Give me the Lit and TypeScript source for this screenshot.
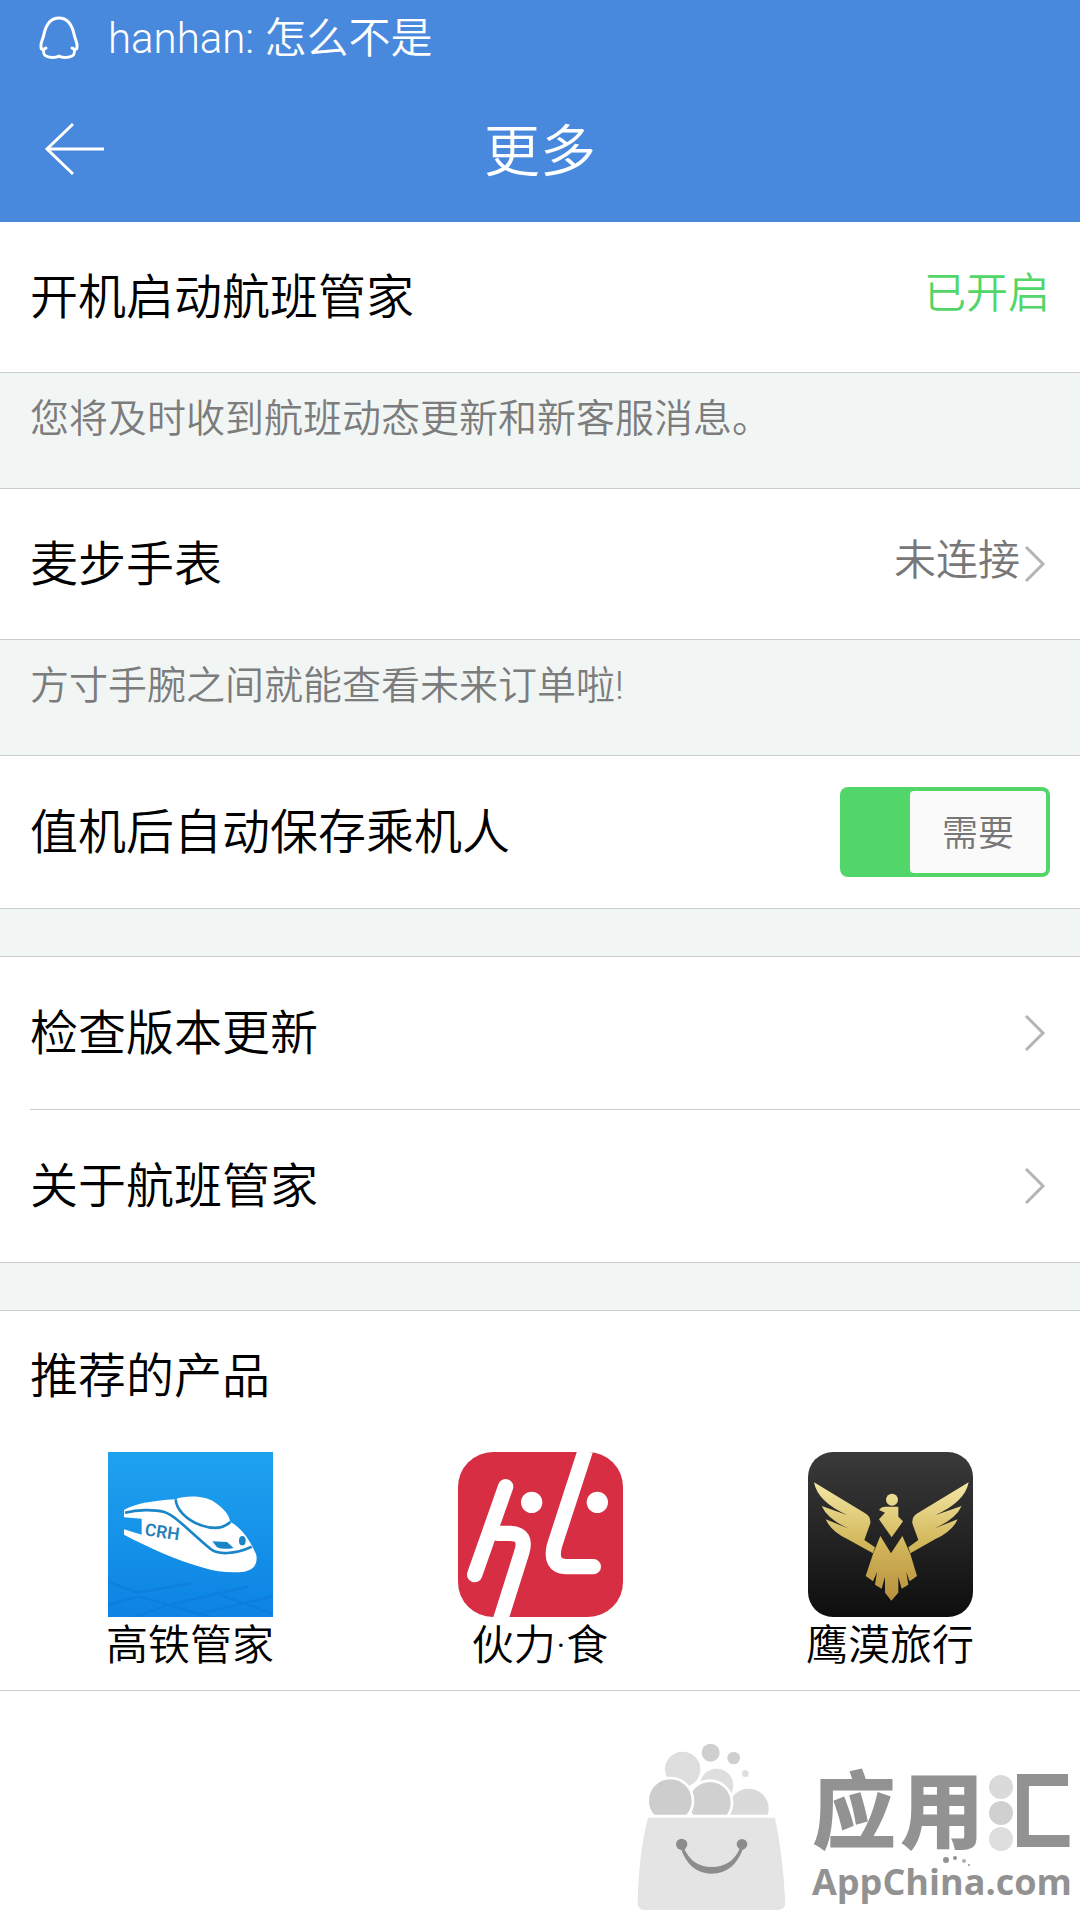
import { LitElement, html, css, svg, nothing } from "lit";
import { customElement, property, state } from "lit/decorators.js";

const trainIcon = svg`
  <defs>
    <linearGradient id="sky" x1="0" y1="0" x2="0" y2="1">
      <stop offset="0" stop-color="#1ea2ee" />
      <stop offset="1" stop-color="#0d83e4" />
    </linearGradient>
  </defs>
  <rect x="21" y="36" width="495" height="495" fill="url(#sky)" />
  <g fill="none" stroke="#0a74cf" stroke-opacity=".4" stroke-width="7">
    <path d="M21 425L110 458L270 430M115 470L330 531M110 470L21 496M205 494L100 531M205 494L440 440M300 520L516 468M350 462L516 522" />
  </g>
  <path fill="#fff" d="M69 210C100 192 150 182 224 178C250 166 310 166 340 186C370 206 384 225 388 246C420 262 445 296 466 345C470 372 460 388 430 395C390 400 350 396 310 384C230 362 150 326 69 284V268L122 284V236L69 232Z" />
  <g fill="none" stroke="#1a86c8" stroke-width="8">
    <path d="M72 218C110 208 160 208 190 216C225 228 260 270 330 328C350 344 400 344 452 320" />
    <path d="M224 178C226 205 250 238 300 256C335 268 365 268 388 246" />
  </g>
  <path fill="#1a86c8" d="M334 304L378 306L398 324Q364 330 348 322Z" />
  <ellipse cx="424" cy="302" rx="10" ry="14" fill="#1a86c8" />
  <text x="130" y="286" transform="rotate(8 130 286)" font-family="Roboto, sans-serif" font-size="52" font-weight="600" fill="#2680b8">CRH</text>`;

const faceIcon = svg`
  <defs><clipPath id="tile"><rect x="21" y="36" width="495" height="495" rx="105" /></clipPath></defs>
  <g clip-path="url(#tile)">
    <rect x="21" y="36" width="495" height="495" fill="#d72e44" />
    <g fill="none" stroke="#fff" stroke-width="46" stroke-linecap="round" stroke-linejoin="round">
      <path d="M164 140L71 404" />
      <path d="M140 280H178Q230 282 212 338L142 560" />
      <path d="M410 10L310 318Q296 378 344 380H427" />
    </g>
    <circle cx="242" cy="187" r="32" fill="#fff" />
    <circle cx="439" cy="187" r="32" fill="#fff" />
  </g>`;

const eagleIcon = svg`
  <defs>
    <linearGradient id="night" x1="0" y1="0" x2="0" y2="1">
      <stop offset="0" stop-color="#3a3a3a" />
      <stop offset="1" stop-color="#0e0e0e" />
    </linearGradient>
    <linearGradient id="gold" gradientUnits="userSpaceOnUse" x1="0" y1="130" x2="0" y2="480">
      <stop offset="0" stop-color="#f3e6a4" />
      <stop offset=".5" stop-color="#d3b85c" />
      <stop offset="1" stop-color="#b8903c" />
    </linearGradient>
  </defs>
  <rect x="21" y="36" width="495" height="495" rx="75" fill="url(#night)" />
  <g fill="url(#gold)">
    <path d="M39 127L190 218Q210 228 208 250L190 300L222 322L216 340L140 298Q90 274 74 238L144 266Q80 238 62 198L140 226Q50 186 39 127Z" />
    <path d="M503 127L352 218Q332 228 334 250L352 300L322 322L328 340L402 298Q454 274 470 238L398 266Q464 238 482 198L402 226Q492 186 503 127Z" />
    <circle cx="273" cy="179" r="18" />
    <path d="M234 210Q240 200 254 200H292V230L306 244L272 292L234 238L252 218Z" />
    <path d="M238 288L270 340L304 288L328 342L348 408L326 424L316 396L322 434L302 446L292 410L292 458L271 482L252 458L252 410L242 446L222 434L228 396L216 424L194 408L216 342Z" />
  </g>`;

const products = [
  { name: "高铁管家", icon: trainIcon },
  { name: "伙力·食", icon: faceIcon },
  { name: "鹰漠旅行", icon: eagleIcon },
];

@customElement("setting-row")
class SettingRow extends LitElement {
  @property() label = "";
  @property() status = "";
  @property({ type: Boolean }) on = false;
  @property({ type: Boolean }) link = false;

  static styles = css`
    :host { display: block; }
    .row {
      box-sizing: border-box;
      min-height: 152px;
      padding: 0 30px;
      display: flex;
      align-items: center;
      justify-content: space-between;
      color: #000;
      text-decoration: none;
      font-size: 48px;
      line-height: 72px;
    }
    :host([status]) .row { min-height: 150px; }
    .label { padding-top: 2px; }
    .side { display: flex; align-items: center; gap: 2px; }
    .status { font-size: 42px; line-height: 60px; padding-bottom: 6px; color: #777; }
    .status.on { color: #52d669; }
    .chevron { display: block; width: 28px; height: 40px; }
  `;

  render() {
    const body = html`
      <span class="label">${this.label}</span>
      <span class="side">
        ${this.status ? html`<span class="status ${this.on ? "on" : ""}">${this.status}</span>` : nothing}
        ${this.link
          ? html`<svg class="chevron" viewBox="0 0 28 40" aria-hidden="true">
              <path d="M4 3L21 20L4 37" fill="none" stroke="#b4b4b4" stroke-width="3" />
            </svg>`
          : nothing}
        <slot></slot>
      </span>`;
    return this.link ? html`<a class="row" href="#">${body}</a>` : html`<div class="row">${body}</div>`;
  }
}

@customElement("need-switch")
class NeedSwitch extends LitElement {
  @state() private checked = true;

  static styles = css`
    :host { display: block; }
    .switch {
      box-sizing: border-box;
      width: 210px;
      height: 90px;
      padding: 4px;
      display: flex;
      border-radius: 8px;
      background: #52d669;
      cursor: pointer;
    }
    .box { appearance: none; margin: 0; flex: 1; }
    .knob {
      box-sizing: border-box;
      width: 136px;
      padding-top: 4px;
      display: grid;
      place-items: center;
      border-radius: 4px;
      background: #fafafa;
      color: #777;
      font-size: 36px;
      line-height: 52px;
    }
  `;

  render() {
    return html`<label class="switch">
      <input class="box" type="checkbox" .checked=${this.checked}
        @change=${(e: Event) => (this.checked = (e.target as HTMLInputElement).checked)} />
      <span class="knob">需要</span>
    </label>`;
  }
}

@customElement("store-brand")
class StoreBrand extends LitElement {
  static styles = css`
    :host { display: flex; align-items: flex-end; gap: 20px; color: #929292; }
    .bag { display: block; width: 160px; height: 172px; }
    .words { display: flex; flex-direction: column; padding-bottom: 10px; width: 262px; white-space: nowrap; }
    .name { display: flex; gap: 4px; font-size: 84px; line-height: 92px; font-weight: 900; }
    .ying { display: flex; gap: 4px; }
    .hui { position: relative; color: transparent; background: linear-gradient(90deg, transparent 35%, #929292 35%); background-clip: text; -webkit-background-clip: text; }
    .drops { position: absolute; left: 0; top: 6px; width: 26px; height: 80px; }
    .site { position: relative; margin-top: 2px; font-family: "Open Sans", sans-serif; font-size: 36px; line-height: 40px; font-weight: 700; }
    .sparks { position: absolute; left: 124px; top: -8px; width: 40px; height: 16px; }
  `;

  render() {
    return html`
      <svg class="bag" viewBox="38 60 480 516" aria-hidden="true">
        <g fill="#dedede">
          <circle cx="190" cy="148" r="53" />
          <circle cx="292" cy="196" r="50" />
        </g>
        <g fill="#cfcfcf">
          <circle cx="274" cy="98" r="27" />
          <circle cx="343" cy="114" r="19" />
          <circle cx="378" cy="161" r="10" fill="#dedede" />
        </g>
        <g stroke="#fff" stroke-width="8">
          <circle cx="388" cy="266" r="64" fill="#dadada" />
          <circle cx="272" cy="248" r="66" fill="#d0d0d0" />
          <circle cx="153" cy="242" r="68" fill="#cdcdcd" />
        </g>
        <path d="M60 284H490V340H60Z" fill="#fff" />
        <path d="M86 293H467Q490 400 498 546Q498 570 474 570H78Q54 570 55 546Q58 400 86 293Z" fill="#e4e4e4" />
        <g fill="#8c8c8c">
          <circle cx="187" cy="373" r="17" />
          <circle cx="368" cy="373" r="16" />
          <path d="M184 384Q210 461 277 461Q344 461 372 384L362 384Q338 441 277 441Q218 441 194 384Z" />
        </g>
      </svg>
      <div class="words">
        <div class="name"><span class="ying"><span>应</span><span>用</span></span><span class="hui">汇<svg class="drops" viewBox="0 0 26 80" aria-hidden="true">
            <circle cx="13" cy="13" r="12" fill="#dadada" />
            <circle cx="13" cy="39" r="12" fill="#d0d0d0" />
            <circle cx="13" cy="65" r="12" fill="#dedede" />
          </svg></span></div>
        <div class="site">AppChina.com<svg class="sparks" viewBox="0 0 40 16" aria-hidden="true">
            <g fill="#929292">
              <circle cx="10" cy="6" r="3" />
              <circle cx="19" cy="4" r="2" />
              <circle cx="28" cy="7" r="2" fill="#b0b0b0" />
              <circle cx="33" cy="11" r="1" />
            </g>
          </svg></div>
      </div>`;
  }
}

@customElement("app-root")
class AppRoot extends LitElement {
  static styles = css`
    :host {
      box-sizing: border-box;
      display: flex;
      flex-direction: column;
      min-height: 100vh;
      background: #fff;
      color: #000;
      font-family: Roboto, "Noto Sans CJK SC", sans-serif;
      font-weight: 350;
    }
    .top { background: #4989dd; color: #fff; }
    .notice {
      display: flex;
      align-items: center;
      gap: 28px;
      height: 76px;
      padding: 0 38px;
      font-size: 42px;
      line-height: 48px;
    }
    .message { padding-top: 2px; }
    .penguin { width: 42px; height: 48px; }
    .bar {
      display: grid;
      grid-template-columns: 80px 1fr 80px;
      align-items: center;
      height: 146px;
      padding: 0 36px;
      box-sizing: border-box;
    }
    .back { display: block; width: 80px; height: 72px; padding: 0; border: 0; background: none; color: #fff; cursor: pointer; }
    .arrow { display: block; width: 80px; height: 72px; }
    .title { margin: 0; padding-top: 6px; text-align: center; font-size: 56px; line-height: 80px; font-weight: inherit; }
    .line { border-bottom: 1px solid #c8cccb; }
    .inset { margin-left: 30px; border-bottom: 1px solid #c8cccb; }
    .hint {
      box-sizing: border-box;
      min-height: 116px;
      margin: 0;
      padding: 16px 30px 39px;
      background: #f1f6f5;
      color: #7c7c7c;
      font-size: 39px;
      line-height: 60px;
      border-bottom: 1px solid #c8cccb;
    }
    .gap { height: 47px; background: #f1f6f5; border-bottom: 1px solid #c8cccb; }
    .products { padding: 30px 15px 15px; }
    .heading { margin: 0 0 39px; padding: 0 15px; font-size: 48px; line-height: 72px; font-weight: inherit; }
    .grid { display: grid; grid-template-columns: repeat(3, 1fr); }
    .app { display: flex; flex-direction: column; align-items: center; color: #000; text-decoration: none; font-size: 42px; line-height: 58px; }
    .icon { display: block; width: 165px; height: 165px; }
    .foot { display: flex; justify-content: flex-end; margin-top: auto; padding: 20px 6px 8px; }
  `;

  render() {
    return html`
      <header class="top">
        <div class="notice">
          <svg class="penguin" viewBox="0 0 42 48" aria-hidden="true">
            <path d="M21 4C30 4 34 11 36 20C37 26 40 29 39 33C39 36 37 36 34 34M36 35C37 38 36 41 34 42C30 44 24 44 21 42C18 44 12 44 8 42C6 41 5 38 6 35M8 34C5 36 3 36 3 33C2 29 5 26 6 20C8 11 12 4 21 4"
              fill="none" stroke="currentColor" stroke-width="3" stroke-linecap="round" stroke-linejoin="round" />
          </svg>
          <span class="message">hanhan: 怎么不是</span>
        </div>
        <div class="bar">
          <button class="back" aria-label="返回">
            <svg class="arrow" viewBox="0 0 80 72" aria-hidden="true">
              <path d="M37 11L11 36L37 61M11 36H68" fill="none" stroke="currentColor" stroke-width="3" />
            </svg>
          </button>
          <h1 class="title">更多</h1>
        </div>
      </header>
      <main>
        <setting-row class="line" label="开机启动航班管家" status="已开启" on></setting-row>
        <p class="hint">您将及时收到航班动态更新和新客服消息。</p>
        <setting-row class="line" label="麦步手表" status="未连接" link></setting-row>
        <p class="hint">方寸手腕之间就能查看未来订单啦!</p>
        <setting-row class="line" label="值机后自动保存乘机人"><need-switch></need-switch></setting-row>
        <div class="gap"></div>
        <setting-row label="检查版本更新" link></setting-row>
        <div class="inset"></div>
        <setting-row class="line" label="关于航班管家" link></setting-row>
        <div class="gap"></div>
        <section class="products line">
          <h2 class="heading">推荐的产品</h2>
          <div class="grid">
            ${products.map(
              (p) => html`<a class="app" href="#">
                <svg class="icon" viewBox="21 36 495 495" aria-hidden="true">${p.icon}</svg>
                <span>${p.name}</span>
              </a>`
            )}
          </div>
        </section>
      </main>
      <footer class="foot"><store-brand></store-brand></footer>
    `;
  }
}
